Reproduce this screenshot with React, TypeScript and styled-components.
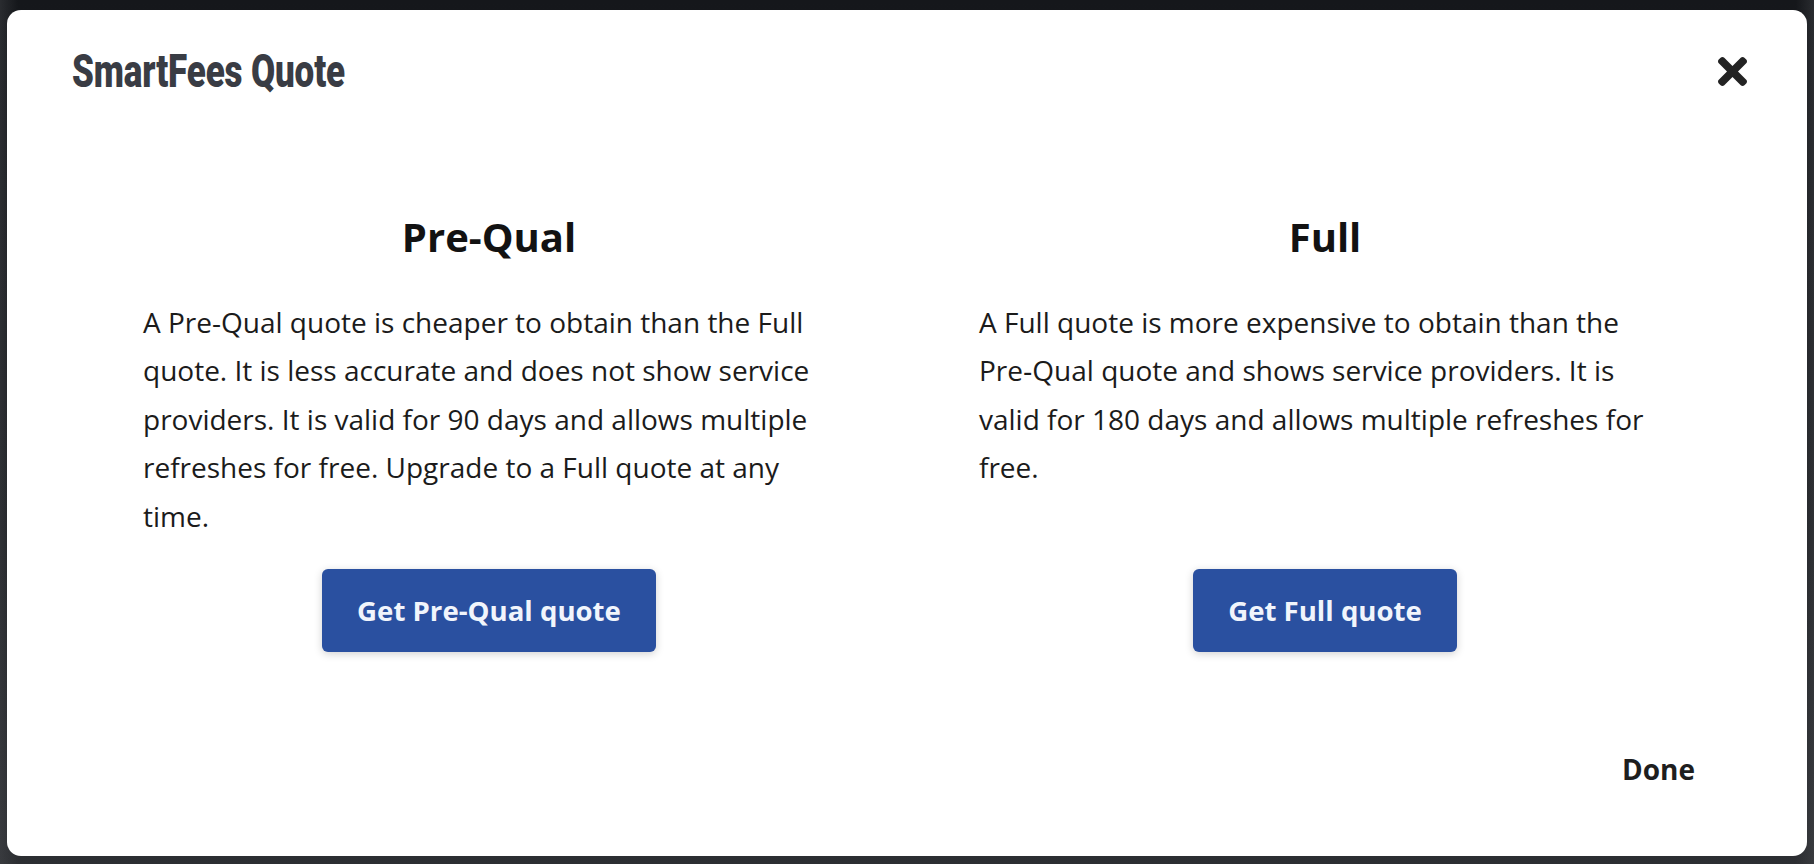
import React from "react";
import styled, { createGlobalStyle } from "styled-components";

const GlobalStyle = createGlobalStyle`
  html, body {
    margin: 0;
    padding: 0;
    height: 100%;
  }
  body {
    background: #17191d;
    font-family: "Open Sans", "Noto Sans", sans-serif;
  }
  #root {
    height: 100%;
  }
  * { box-sizing: border-box; }
`;

const Backdrop = styled.div`
  height: 100vh;
  padding: 10px 7px 8px 7px;
  display: flex;
  background:
    linear-gradient(90deg, rgba(80, 82, 86, 0.35) 0%, rgba(0, 0, 0, 0) 1%, rgba(0, 0, 0, 0) 99%, rgba(80, 82, 86, 0.35) 100%),
    linear-gradient(180deg, #15171b 0%, #1d1f23 60%, #2c2e32 100%);
`;

const Modal = styled.div`
  flex: 1;
  background: #ffffff;
  border-radius: 14px;
  display: flex;
  flex-direction: column;
  overflow: hidden;
`;

const Header = styled.div`
  height: 122px;
  padding: 0 60px 0 65px;
  display: flex;
  align-items: center;
  justify-content: space-between;
`;

const Title = styled.h2`
  margin: 0;
  font-family: "Roboto", "Liberation Sans", sans-serif;
  font-weight: 900;
  font-size: 47px;
  line-height: 1.2;
  color: #393c44;
  transform: scaleX(0.745);
  transform-origin: left center;
  white-space: nowrap;
  letter-spacing: -0.2px;
`;

const CloseButton = styled.button`
  border: none;
  background: none;
  padding: 0;
  margin: 0;
  width: 29px;
  height: 29px;
  display: flex;
  align-items: center;
  justify-content: center;
  cursor: pointer;
  color: #232323;
`;

const Body = styled.div`
  padding-top: 82px;
  display: grid;
  grid-template-columns: 692px 692px;
  column-gap: 144px;
  justify-content: center;
`;

const Column = styled.div`
  display: flex;
  flex-direction: column;
  align-items: stretch;
`;

const Heading = styled.h3`
  margin: 0 0 37px 0;
  text-align: center;
  font-family: "Open Sans", sans-serif;
  font-weight: 700;
  font-size: 40px;
  line-height: 1.17;
  color: #121212;
`;

const Text = styled.p`
  margin: 0;
  padding-right: 16px;
  font-family: "Open Sans", sans-serif;
  font-weight: 400;
  font-size: 28px;
  line-height: 48.5px;
  color: #1b1b1b;
`;

const ActionRow = styled.div`
  margin-top: auto;
  padding-top: 29px;
  display: flex;
  justify-content: center;
`;

const PrimaryButton = styled.button`
  height: 83px;
  padding: 0 35px;
  border: none;
  border-radius: 6px;
  background: #2a50a0;
  color: #f1f5fc;
  font-family: "Open Sans", sans-serif;
  font-weight: 700;
  font-size: 27.6px;
  line-height: 1;
  box-shadow: 0 2px 8px rgba(0, 0, 0, 0.18);
  cursor: pointer;
  display: flex;
  align-items: center;
`;

const Footer = styled.div`
  margin-top: auto;
  padding: 0 112px 69px 0;
  display: flex;
  justify-content: flex-end;
`;

const DoneButton = styled.button`
  border: none;
  background: none;
  padding: 0;
  font-family: "Open Sans", sans-serif;
  font-weight: 700;
  font-size: 28px;
  line-height: 1.2;
  color: #1e1e1e;
  cursor: pointer;
`;

const CloseIcon = () => (
  <svg width="29" height="29" viewBox="0 80 352 352" fill="currentColor" aria-hidden="true">
    <path d="M242.72 256l100.07-100.07c12.28-12.28 12.28-32.19 0-44.48l-22.24-22.24c-12.28-12.28-32.19-12.28-44.48 0L176 189.28 75.930 89.21c-12.28-12.28-32.19-12.28-44.48 0L9.21 111.45c-12.28 12.28-12.28 32.19 0 44.48L109.28 256 9.21 356.07c-12.28 12.28-12.28 32.19 0 44.48l22.24 22.24c12.28 12.28 32.2 12.28 44.48 0L176 322.72l100.07 100.07c12.28 12.28 32.2 12.28 44.48 0l22.24-22.24c12.28-12.28 12.28-32.19 0-44.48L242.72 256z" />
  </svg>
);

const options = [
  {
    title: "Pre-Qual",
    text: "A Pre-Qual quote is cheaper to obtain than the Full quote. It is less accurate and does not show service providers. It is valid for 90 days and allows multiple refreshes for free. Upgrade to a Full quote at any time.",
    action: "Get Pre-Qual quote",
  },
  {
    title: "Full",
    text: "A Full quote is more expensive to obtain than the Pre\u2011Qual quote and shows service providers. It is valid for 180 days and allows multiple refreshes for free.",
    action: "Get Full quote",
  },
];

export default function App() {
  return (
    <>
      <GlobalStyle />
      <Backdrop>
        <Modal>
          <Header>
            <Title>SmartFees Quote</Title>
            <CloseButton aria-label="Close">
              <CloseIcon />
            </CloseButton>
          </Header>
          <Body>
            {options.map((o) => (
              <Column key={o.title}>
                <Heading>{o.title}</Heading>
                <Text>{o.text}</Text>
                <ActionRow>
                  <PrimaryButton>{o.action}</PrimaryButton>
                </ActionRow>
              </Column>
            ))}
          </Body>
          <Footer>
            <DoneButton>Done</DoneButton>
          </Footer>
        </Modal>
      </Backdrop>
    </>
  );
}
